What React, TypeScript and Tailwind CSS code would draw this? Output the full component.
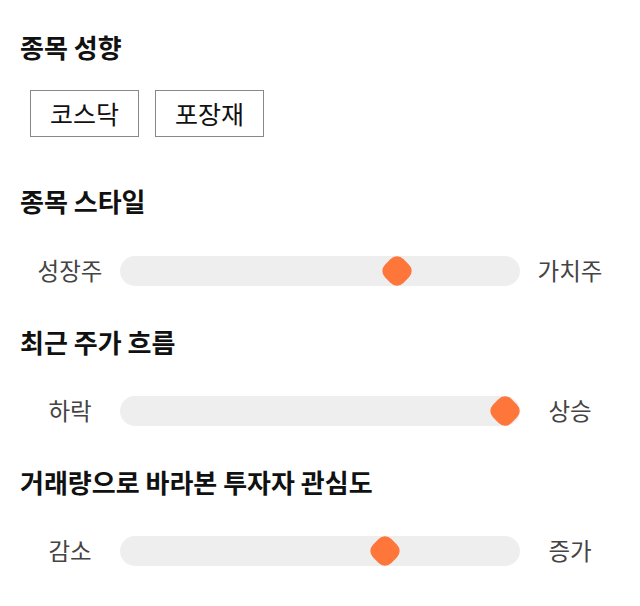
import React from 'react';

const font = { fontFamily: '"Noto Sans CJK KR", "Noto Sans", sans-serif' };

function Thumb() {
    return <div className="w-[26px] h-[26px] rounded-[9px] bg-[#ff763b] rotate-45" />;
}

function Slider({ left, right, value }: { left: string; right: string; value: number }) {
    return (
        <div className="flex items-center h-[30px]">
            <div className="w-[100px] text-center text-[23.5px] text-[#444]">{left}</div>
            <div className="relative w-[400px] h-[30px] rounded-full bg-[#eeeeee]">
                <div
                    className="absolute top-[2px] -translate-x-1/2"
                    style={{ left: `${value * 100}%` }}
                >
                    <Thumb />
                </div>
            </div>
            <div className="w-[100px] text-center text-[23.5px] text-[#444]">{right}</div>
        </div>
    );
}

function Heading({ children }: { children: React.ReactNode }) {
    return <h2 className="text-[26px] leading-[30px] font-bold text-[#111]">{children}</h2>;
}

function Chip({ children }: { children: React.ReactNode }) {
    return (
        <div className="h-[47px] w-[109px] flex items-center justify-center border border-[#888] text-[25px] text-[#111]">
            {children}
        </div>
    );
}

export default function App() {
    return (
        <div className="w-[640px] h-[606px] bg-white px-5 pt-[32px]" style={font}>
            <Heading>종목 성향</Heading>
            <div className="flex gap-4 ml-[10px] mt-[28px]">
                <Chip>코스닥</Chip>
                <Chip>포장재</Chip>
            </div>

            <div className="mt-[49px] flex flex-col gap-10">
                <Heading>종목 스타일</Heading>
                <Slider left="성장주" right="가치주" value={0.6925} />
            </div>
            <div className="mt-[41px] flex flex-col gap-[39px]">
                <Heading>최근 주가 흐름</Heading>
                <Slider left="하락" right="상승" value={0.9625} />
            </div>
            <div className="mt-[41px] flex flex-col gap-[39px]">
                <Heading>거래량으로 바라본 투자자 관심도</Heading>
                <Slider left="감소" right="증가" value={0.6625} />
            </div>
        </div>
    );
}
